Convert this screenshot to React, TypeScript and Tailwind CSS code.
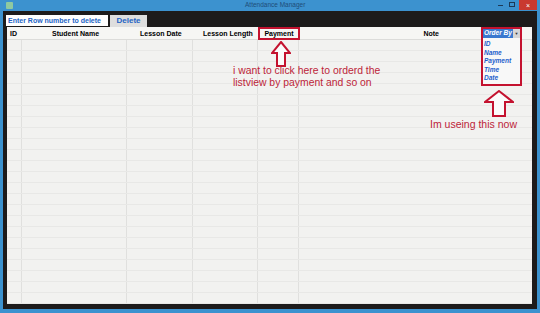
import React from "react";

const cols = [15, 105, 66, 65, 41];
const rows = Array.from({ length: 24 }, (_, i) => i);
const orderItems = ["ID", "Name", "Payment", "Time", "Date"];

function UpArrow({ w, h }: { w: number; h: number }) {
  const head = Math.round(h * 0.45);
  const stemL = Math.round(w * 0.3);
  const stemR = w - stemL;
  return (
    <svg width={w} height={h} viewBox={`0 0 ${w} ${h}`}>
      <path
        d={`M${w / 2} 1 L${w - 1} ${head} L${stemR} ${head} L${stemR} ${h - 1} L${stemL} ${h - 1} L${stemL} ${head} L1 ${head} Z`}
        fill="#fbfbfb"
        stroke="#c4122f"
        strokeWidth="2"
        strokeLinejoin="miter"
      />
    </svg>
  );
}

export default function App() {
  return (
    <div className="w-[540px] h-[313px] bg-[#3c92cf] flex flex-col px-[3px] pb-[4px] font-['Liberation_Sans',Arial,sans-serif] overflow-hidden">
      {/* title bar */}
      <div className="h-[12px] relative flex items-center">
        <div className="ml-[3px] w-[7px] h-[7px] bg-[#8fc9a0] rounded-[1px]" />
        <div className="absolute left-[242px] top-[2px] text-[6.5px] leading-none text-[#1f4d78]">
          Attendance Manager
        </div>
        <div className="ml-auto flex items-start h-full">
          <span className="mt-[5px] w-[5px] h-[1px] bg-[#1c3a58] mr-[6px]" />
          <span className="mt-[2px] w-[6px] h-[5px] border border-[#1c3a58] mr-[4px]" />
          <span className="w-[18px] h-[10px] bg-[#c9392f] flex items-center justify-center text-white text-[7px] leading-none">
            ×
          </span>
        </div>
      </div>

      {/* window body */}
      <div className="flex-1 bg-[#1d1b1b] flex flex-col pl-[4px] pr-[5px] pb-[5px]">
        <div className="h-[16px] flex items-start">
          <div className="-ml-[1px] mt-[4px] w-[102px] h-[11px] bg-white flex items-center pl-[2px] text-[7px] font-bold text-[#2464c4] leading-none">
            Enter Row number to delete
          </div>
          <div className="ml-[2px] mt-[4px] w-[37px] h-[12px] bg-[#dedede] flex items-center justify-center text-[8px] font-bold text-[#2464c4] leading-none">
            Delete
          </div>
        </div>

        {/* list view */}
        <div className="flex-1 bg-[#f2f2f0] relative flex flex-col overflow-hidden">
          <div className="h-[13px] flex items-center text-[7px] font-bold text-black leading-none border-b border-[#dcdcda] bg-[#f6f6f4]">
            <div className="w-[45px] pl-[3px]">ID</div>
            <div className="w-[88px]">Student Name</div>
            <div className="w-[63px]">Lesson Date</div>
            <div className="w-[55px]">Lesson Length</div>
            <div className="w-[42px] h-[13px] border-2 border-[#c4122f] flex items-center justify-center">
              Payment
            </div>
            <div className="flex-1 text-right pr-[93px]">Note</div>
          </div>
          <div className="flex-1 flex flex-col">
            {rows.map((r) => (
              <div key={r} className="h-[11px] shrink-0 flex border-b border-[#e8e8e6]">
                {cols.map((c, i) => (
                  <div key={i} style={{ width: c }} className="border-r border-[#e0e0de]" />
                ))}
                <div className="flex-1" />
              </div>
            ))}
          </div>

          {/* order by listbox */}
          <div className="absolute left-[474px] top-[0px] w-[41px] h-[59px] border-2 border-[#c4122f] bg-[#f8f8f8] flex flex-col">
            <div className="flex h-[9px] items-stretch">
              <div className="flex-1 bg-[#3a78cf] text-white italic font-bold text-[6.5px] leading-none flex items-center pl-[1px]">
                Order By
              </div>
              <div className="w-[7px] bg-[#d6d6d6] flex items-center justify-center text-[4px] text-[#333]">
                ▼
              </div>
            </div>
            <div className="flex flex-col pl-[1px] pt-[3px]">
              {orderItems.map((o) => (
                <div key={o} className="h-[8.5px] text-[6.5px] italic font-bold text-[#1e5fcc] leading-none">
                  {o}
                </div>
              ))}
            </div>
          </div>

          {/* annotations */}
          <div className="absolute left-[264px] top-[14px]">
            <UpArrow w={20} h={26} />
          </div>
          <div className="absolute left-[226px] top-[38px] text-[10.4px] leading-[12px] text-[#bd2439]">
            i want to click here to orderd the
            <br />
            listview by payment and so on
          </div>
          <div className="absolute left-[477px] top-[63px]">
            <UpArrow w={30} h={27} />
          </div>
          <div className="absolute left-[423px] top-[91px] text-[10.5px] leading-[12px] text-[#bd2439]">
            Im useing this now
          </div>
        </div>
      </div>
    </div>
  );
}
